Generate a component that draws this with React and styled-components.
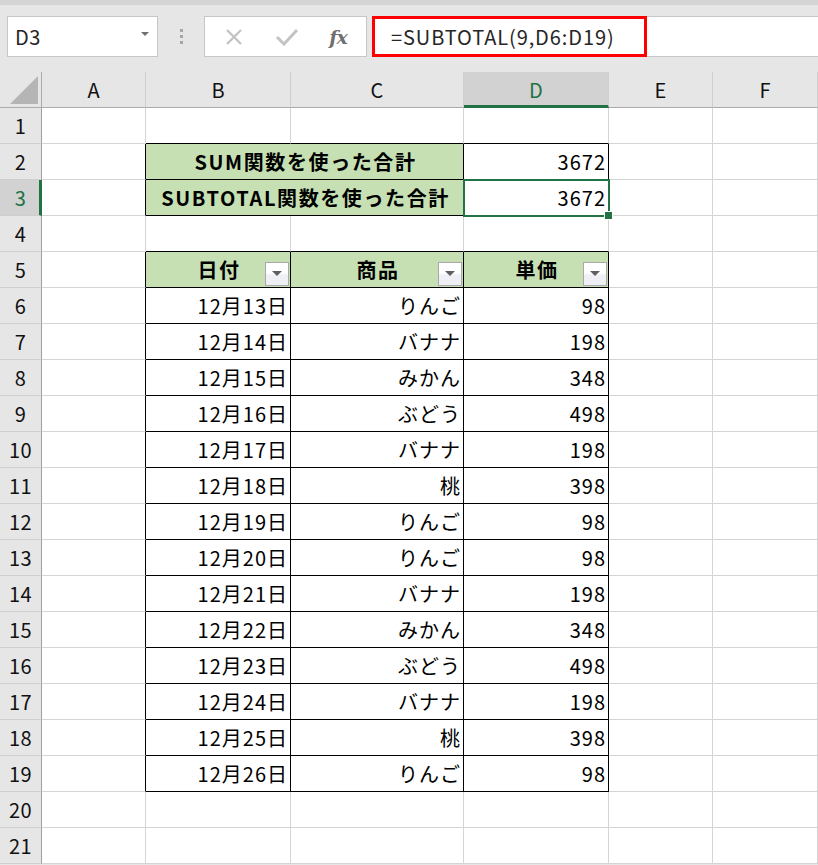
import React from "react";
import styled, {createGlobalStyle} from "styled-components";

const GlobalStyle = createGlobalStyle`
  html, body { margin: 0; padding: 0; background: #e6e6e6; }
  body { font-family: "Noto Sans CJK JP", "Noto Sans", sans-serif; overflow: hidden; }
`;

const COLS = ["A", "B", "C", "D", "E", "F"];
const WIDTHS = [42, 104, 145, 173, 145, 104, 105];
const ROW_COUNT = 21;

const rows = [
  ["12月13日", "りんご", "98"],
  ["12月14日", "バナナ", "198"],
  ["12月15日", "みかん", "348"],
  ["12月16日", "ぶどう", "498"],
  ["12月17日", "バナナ", "198"],
  ["12月18日", "桃", "398"],
  ["12月19日", "りんご", "98"],
  ["12月20日", "りんご", "98"],
  ["12月21日", "バナナ", "198"],
  ["12月22日", "みかん", "348"],
  ["12月23日", "ぶどう", "498"],
  ["12月24日", "バナナ", "198"],
  ["12月25日", "桃", "398"],
  ["12月26日", "りんご", "98"],
];

// col index: 1 = A ... 6 = F ; row 1..21
const inTable = (c, r) =>
  ((r === 2 || r === 3) && c >= 2 && c <= 4) || (r >= 5 && r <= 19 && c >= 2 && c <= 4);

const Page = styled.div`
  width: 818px;
  height: 865px;
  overflow: hidden;
  background: #e6e6e6;
`;

const Toolbar = styled.div`
  height: 72px;
  box-sizing: border-box;
  border-top: 5px solid #d4d4d4;
  padding: 11px 0 0 7px;
  display: flex;
  align-items: flex-start;
`;

const NameBox = styled.div`
  width: 151px;
  height: 41px;
  box-sizing: border-box;
  background: #fff;
  border: 1px solid #c6c6c6;
  display: flex;
  align-items: center;
  justify-content: space-between;
  padding: 0 8px 0 7px;
  font-size: 20px;
  color: #262626;
  letter-spacing: 0.5px;
`;

const Caret = styled.span`
  width: 0;
  height: 0;
  border-left: 4px solid transparent;
  border-right: 4px solid transparent;
  border-top: 4px solid #707070;
  margin-bottom: 6px;
`;

const Grip = styled.div`
  width: 46px;
  height: 41px;
  display: flex;
  flex-direction: column;
  align-items: center;
  justify-content: center;
  gap: 3px;
  span {
    width: 3px;
    height: 3px;
    background: #a6a6a6;
  }
`;

const ButtonBox = styled.div`
  width: 163px;
  height: 41px;
  box-sizing: border-box;
  background: #fff;
  border: 1px solid #c6c6c6;
  display: flex;
  align-items: center;
  justify-content: space-around;
  padding: 0 4px;
`;

const Fx = styled.span`
  font-family: "DejaVu Serif", "Liberation Serif", serif;
  font-style: italic;
  font-weight: 700;
  font-size: 19px;
  color: #6f6f6f;
  letter-spacing: -1px;
`;

const FormulaBar = styled.div`
  flex: 1;
  margin-left: 5px;
  height: 41px;
  box-sizing: border-box;
  background: #fff;
  border-top: 1px solid #c6c6c6;
  border-bottom: 1px solid #c6c6c6;
  display: flex;
  align-items: stretch;
`;

const FormulaHighlight = styled.div`
  width: 275px;
  box-sizing: border-box;
  border: 3px solid #ff0000;
  margin-top: -1px;
  margin-bottom: -1px;
  display: flex;
  align-items: center;
  padding-left: 16px;
  font-size: 20px;
  color: #262626;
  letter-spacing: 0.9px;
`;

const Sheet = styled.div`
  position: relative;
  display: grid;
  grid-template-columns: ${WIDTHS.map((w) => w + "px").join(" ")};
  grid-auto-rows: 36px;
  background: #fff;
`;

const Corner = styled.div`
  background: #e6e6e6;
  border-right: 1px solid #ababab;
  border-bottom: 1px solid #ababab;
  box-sizing: border-box;
  display: flex;
  align-items: flex-end;
  justify-content: flex-end;
  padding: 0 3px 3px 0;
`;

const ColHead = styled.div`
  box-sizing: border-box;
  background: ${(p) => (p.$active ? "#d2d2d2" : "#e6e6e6")};
  border-right: 1px solid #cfcfcf;
  border-bottom: ${(p) => (p.$active ? "3px solid #217346" : "1px solid #ababab")};
  display: flex;
  align-items: center;
  justify-content: center;
  font-size: 20px;
  color: ${(p) => (p.$active ? "#217346" : "#111")};
  padding-top: ${(p) => (p.$active ? "2px" : "0")};
`;

const RowHead = styled.div`
  box-sizing: border-box;
  background: ${(p) => (p.$active ? "#d2d2d2" : "#e6e6e6")};
  border-right: ${(p) => (p.$active ? "3px solid #217346" : "1px solid #9f9f9f")};
  border-bottom: 1px solid #cfcfcf;
  display: flex;
  align-items: center;
  justify-content: center;
  font-size: 20px;
  letter-spacing: 0.5px;
  color: ${(p) => (p.$active ? "#217346" : "#111")};
  padding-left: ${(p) => (p.$active ? "2px" : "0")};
`;

const Cell = styled.div`
  position: relative;
  box-sizing: border-box;
  grid-column: span ${(p) => p.$span || 1};
  background: ${(p) => (p.$head ? "#c6e0b4" : "#fff")};
  border-right: 1px solid ${(p) => (p.$rInk ? "#000" : "#d4d4d4")};
  border-bottom: 1px solid ${(p) => (p.$bInk ? "#000" : "#d4d4d4")};
  display: flex;
  align-items: center;
  justify-content: ${(p) => (p.$center ? "center" : "flex-end")};
  padding: 0 2px 0 4px;
  font-size: 20px;
  font-weight: ${(p) => (p.$head ? 700 : 400)};
  letter-spacing: ${(p) => (p.$head ? "1.6px" : "1px")};
  color: #000;
  white-space: nowrap;
`;

const FilterButton = styled.div`
  position: absolute;
  right: 1px;
  bottom: 1px;
  width: 24px;
  height: 24px;
  box-sizing: border-box;
  border: 1px solid #a9a9a9;
  background: linear-gradient(#ffffff 0%, #ffffff 45%, #eef0f6 55%, #eef0f6 100%);
  display: flex;
  align-items: center;
  justify-content: center;
  &::after {
    content: "";
    width: 0;
    height: 0;
    border-left: 5px solid transparent;
    border-right: 5px solid transparent;
    border-top: 5px solid #5f5f5f;
    margin-top: -2px;
  }
`;

const Selection = styled.div`
  position: absolute;
  left: 463px;
  top: 107px;
  width: 147px;
  height: 38px;
  box-sizing: border-box;
  border: 2px solid #217346;
  pointer-events: none;
`;

const FillHandle = styled.div`
  position: absolute;
  right: -5px;
  bottom: -5px;
  width: 7px;
  height: 7px;
  background: #217346;
  border: 1px solid #fff;
`;

function Cross() {
  return (
    <svg width="20" height="20" viewBox="0 0 20 20">
      <path d="M3 3 L17 17 M17 3 L3 17" stroke="#c4c4c4" strokeWidth="2.4" fill="none" />
    </svg>
  );
}

function Check() {
  return (
    <svg width="24" height="20" viewBox="0 0 24 20">
      <path d="M2 10 L9 17 L22 3" stroke="#c4c4c4" strokeWidth="3" fill="none" />
    </svg>
  );
}

function cellFor(c, r) {
  const rInk = inTable(c, r) || inTable(c + 1, r);
  const bInk = inTable(c, r) || inTable(c, r + 1);
  const key = `${c}-${r}`;
  if (r === 2 || r === 3) {
    if (c === 2) {
      const label = r === 2 ? "SUM関数を使った合計" : "SUBTOTAL関数を使った合計";
      return (
        <Cell key={key} $span={2} $head $center $rInk $bInk>
          {label}
        </Cell>
      );
    }
    if (c === 3) return null;
    if (c === 4) {
      return (
        <Cell key={key} $rInk $bInk>
          3672
        </Cell>
      );
    }
  }
  if (r === 5 && c >= 2 && c <= 4) {
    const label = ["日付", "商品", "単価"][c - 2];
    return (
      <Cell key={key} $head $center $rInk $bInk>
        {label}
        <FilterButton />
      </Cell>
    );
  }
  if (r >= 6 && r <= 19 && c >= 2 && c <= 4) {
    return (
      <Cell key={key} $rInk $bInk>
        {rows[r - 6][c - 2]}
      </Cell>
    );
  }
  return <Cell key={key} $rInk={rInk} $bInk={bInk} />;
}

export default function App() {
  const body = [];
  for (let r = 1; r <= ROW_COUNT; r++) {
    body.push(
      <RowHead key={`h${r}`} $active={r === 3}>
        {r}
      </RowHead>
    );
    for (let c = 1; c <= 6; c++) {
      const cell = cellFor(c, r);
      if (cell) body.push(cell);
    }
  }

  return (
    <Page>
      <GlobalStyle />
      <Toolbar>
        <NameBox>
          D3
          <Caret />
        </NameBox>
        <Grip>
          <span />
          <span />
          <span />
        </Grip>
        <ButtonBox>
          <Cross />
          <Check />
          <Fx>fx</Fx>
        </ButtonBox>
        <FormulaBar>
          <FormulaHighlight>=SUBTOTAL(9,D6:D19)</FormulaHighlight>
        </FormulaBar>
      </Toolbar>
      <Sheet>
        <Corner>
          <svg width="28" height="28" viewBox="0 0 28 28">
            <polygon points="28,0 28,28 0,28" fill="#b5b5b5" />
          </svg>
        </Corner>
        {COLS.map((col) => (
          <ColHead key={col} $active={col === "D"}>
            {col}
          </ColHead>
        ))}
        {body}
        <Selection>
          <FillHandle />
        </Selection>
      </Sheet>
    </Page>
  );
}
